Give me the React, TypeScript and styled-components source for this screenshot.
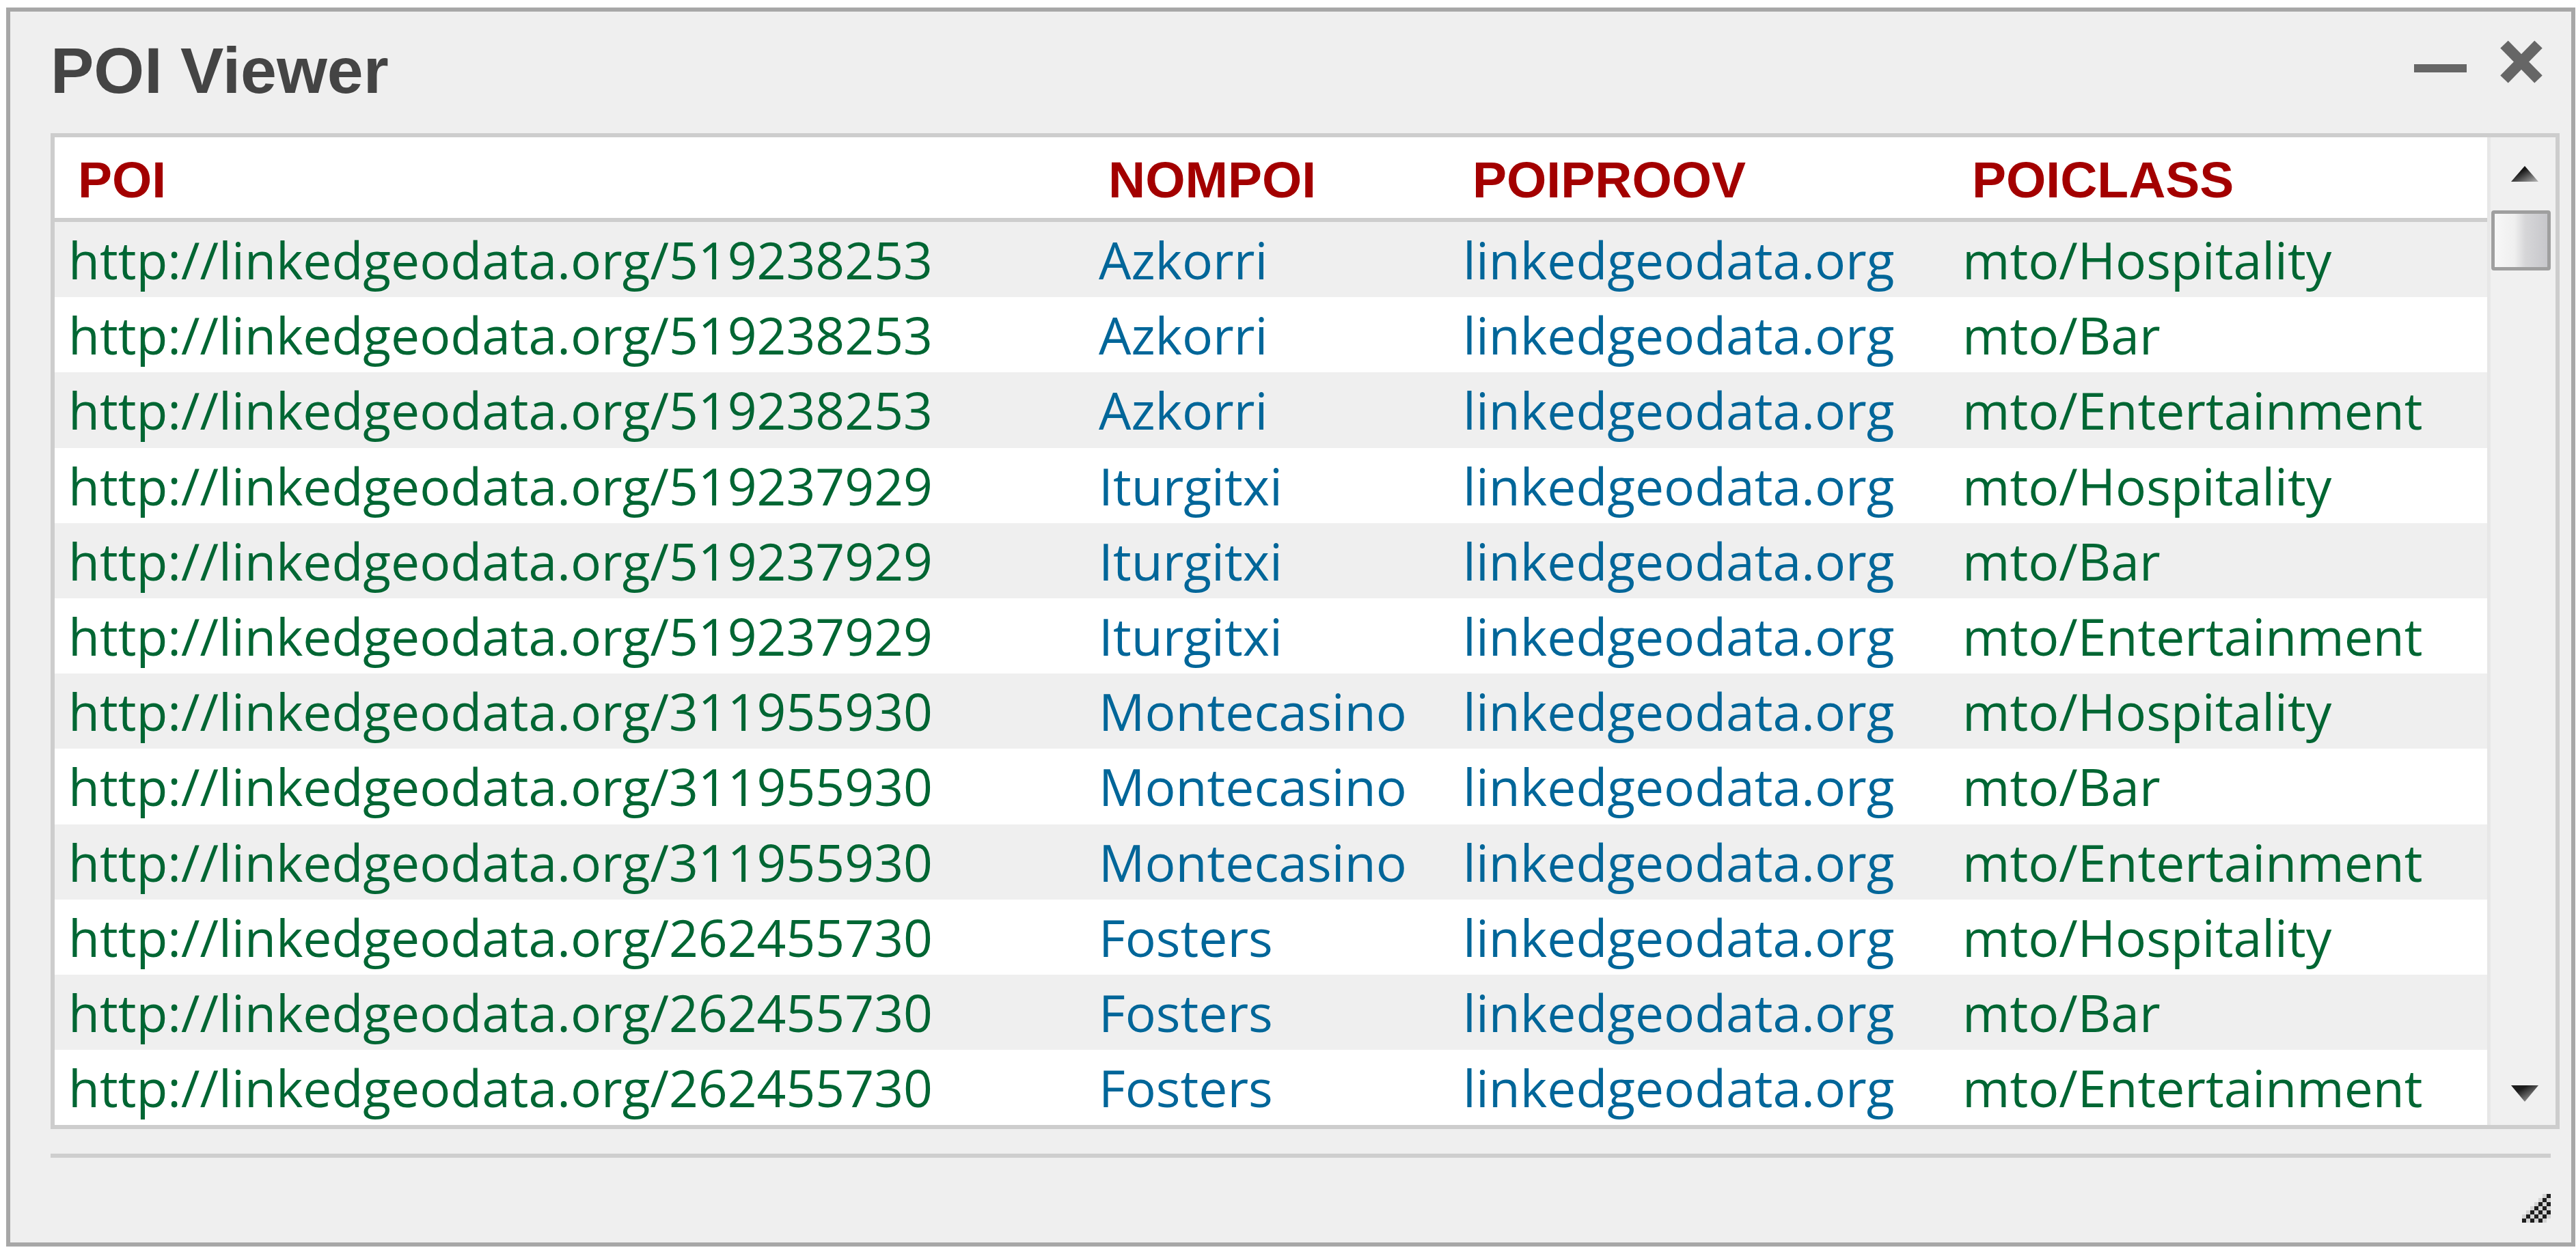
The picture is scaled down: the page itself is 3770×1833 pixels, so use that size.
import React from "react";
import styled, { createGlobalStyle } from "styled-components";

const GlobalStyle = createGlobalStyle`
  html, body {
    margin: 0;
    padding: 0;
    background: #ffffff;
    font-family: "Open Sans", "Liberation Sans", sans-serif;
  }
  * { box-sizing: border-box; }
`;

const Page = styled.div`
  padding: 11px 0 0 9px;
`;

const Window = styled.section`
  width: 3760px;
  height: 1814px;
  border: 6px solid #a7a7a7;
  background: #efefef;
  display: flex;
  flex-direction: column;
  padding: 0 17px 0 59px;
`;

const TitleBar = styled.header`
  height: 178px;
  flex-shrink: 0;
  display: flex;
  justify-content: space-between;
  align-items: flex-start;
`;

const Title = styled.h1`
  margin: 36px 0 0 0;
  font-family: "Liberation Sans", Arial, sans-serif;
  font-weight: bold;
  font-size: 95px;
  line-height: 100px;
  color: #444444;
`;

const WindowActions = styled.div`
  display: flex;
  align-items: flex-start;
  gap: 48px;
  margin: 41px 24px 0 0;
`;

const IconButton = styled.button<{ $w: number }>`
  width: ${(p) => p.$w}px;
  height: 65px;
  padding: 0;
  border: none;
  background: transparent;
  display: block;
  cursor: pointer;
  svg { display: block; }
`;

const TableFrame = styled.div`
  height: 1458px;
  flex-shrink: 0;
  border: 6px solid #cdcdcd;
  background: #ffffff;
  display: flex;
`;

const TableContent = styled.div`
  flex: 1;
  display: flex;
  flex-direction: column;
  overflow: hidden;
`;

const columns = "1508px 533px 731px 1fr";

const HeaderRow = styled.div`
  display: grid;
  grid-template-columns: ${columns};
  height: 124px;
  flex-shrink: 0;
  background: #ffffff;
  border-bottom: 6px solid #cdcdcd;
`;

const HeaderCell = styled.div`
  padding: 6px 0 0 34px;
  font-family: "Liberation Sans", Arial, sans-serif;
  font-weight: bold;
  font-size: 75px;
  line-height: 112px;
  color: #a30000;
  white-space: nowrap;
`;

const DataRow = styled.div<{ $odd: boolean }>`
  display: grid;
  grid-template-columns: ${columns};
  height: 110.2px;
  flex-shrink: 0;
  background: ${(p) => (p.$odd ? "#efefef" : "#ffffff")};
`;

const DataCell = styled.div<{ $tone: "green" | "blue" }>`
  padding-left: 20px;
  font-family: "Open Sans", sans-serif;
  font-size: 75px;
  line-height: 110.2px;
  color: ${(p) => (p.$tone === "green" ? "#006633" : "#006699")};
  white-space: nowrap;
`;

const Scrollbar = styled.div`
  width: 100px;
  flex-shrink: 0;
  display: flex;
  flex-direction: column;
  background: #f0f0f0;
  border-left: 5px solid #e7e7e7;
`;

const ScrollButton = styled.div<{ $h: number; $top: number }>`
  height: ${(p) => p.$h}px;
  flex-shrink: 0;
  display: flex;
  justify-content: center;
  padding: ${(p) => p.$top}px 0 0 5px;
`;

const ScrollThumb = styled.div`
  height: 88px;
  flex-shrink: 0;
  margin: 0 7px 0 1px;
  border: 5px solid #9f9f9f;
  border-radius: 4px;
  background: linear-gradient(to right, #f7f7f7 0%, #efefef 38%, #d6d6d8 58%, #c7c7cb 100%);
`;

const ScrollTrack = styled.div`
  flex: 1;
`;

const Separator = styled.div`
  height: 6px;
  flex-shrink: 0;
  margin: 36px 13px 0 0;
  background: #cecece;
`;

const Footer = styled.footer`
  flex: 1;
  display: flex;
  justify-content: flex-end;
  align-items: flex-end;
  padding: 0 13px 29px 0;
`;

type Row = { poi: string; nom: string; prov: string; cls: string };

const places: [string, string][] = [
  ["519238253", "Azkorri"],
  ["519237929", "Iturgitxi"],
  ["311955930", "Montecasino"],
  ["262455730", "Fosters"],
];
const classes = ["mto/Hospitality", "mto/Bar", "mto/Entertainment"];

const rows: Row[] = places.flatMap(([id, nom]) =>
  classes.map((cls) => ({
    poi: `http://linkedgeodata.org/${id}`,
    nom,
    prov: "linkedgeodata.org",
    cls,
  }))
);

const MinimizeIcon = () => (
  <svg width="77" height="65" viewBox="0 0 77 65">
    <rect x="0" y="36" width="77" height="12" fill="#666666" />
  </svg>
);

const CloseIcon = () => (
  <svg width="64" height="65" viewBox="0 0 64 65">
    <line x1="7" y1="7" x2="57" y2="58" stroke="#666666" strokeWidth="16" />
    <line x1="57" y1="7" x2="7" y2="58" stroke="#666666" strokeWidth="16" />
  </svg>
);

const UpArrow = () => (
  <svg width="40" height="23" viewBox="0 0 40 23">
    <defs>
      <linearGradient id="upGrad" x1="0" y1="0" x2="1" y2="1">
        <stop offset="0.35" stopColor="#151515" />
        <stop offset="1" stopColor="#b8b8b8" />
      </linearGradient>
    </defs>
    <polygon points="20,0 40,23 0,23" fill="url(#upGrad)" />
  </svg>
);

const DownArrow = () => (
  <svg width="40" height="24" viewBox="0 0 40 24">
    <defs>
      <linearGradient id="downGrad" x1="0" y1="0" x2="1" y2="1">
        <stop offset="0.3" stopColor="#1c1c1c" />
        <stop offset="1" stopColor="#c0c0c0" />
      </linearGradient>
    </defs>
    <polygon points="0,0 40,0 20,24" fill="url(#downGrad)" />
  </svg>
);

const ResizeGrip = () => {
  const cells: React.ReactNode[] = [];
  for (let r = 0; r < 7; r++) {
    for (let c = 0; c < 7; c++) {
      const s = r + c;
      if (s >= 6 && s <= 10 && s % 2 === 0) {
        cells.push(<rect key={`${r}-${c}`} x={c * 6} y={r * 6} width="6" height="6" fill="#1e1e1e" />);
      } else if (s >= 5 && s <= 11 && s % 2 === 1) {
        cells.push(<rect key={`${r}-${c}`} x={c * 6} y={r * 6} width="6" height="6" fill="#d4d4d4" />);
      }
    }
  }
  return (
    <svg width="42" height="42" viewBox="0 0 42 42">
      {cells}
    </svg>
  );
};

export default function App() {
  return (
    <>
      <GlobalStyle />
      <Page>
        <Window>
          <TitleBar>
            <Title>POI Viewer</Title>
            <WindowActions>
              <IconButton $w={77} aria-label="Minimize">
                <MinimizeIcon />
              </IconButton>
              <IconButton $w={64} aria-label="Close">
                <CloseIcon />
              </IconButton>
            </WindowActions>
          </TitleBar>
          <TableFrame>
            <TableContent>
              <HeaderRow>
                <HeaderCell>POI</HeaderCell>
                <HeaderCell>NOMPOI</HeaderCell>
                <HeaderCell>POIPROOV</HeaderCell>
                <HeaderCell>POICLASS</HeaderCell>
              </HeaderRow>
              {rows.map((r, i) => (
                <DataRow key={i} $odd={i % 2 === 0}>
                  <DataCell $tone="green">{r.poi}</DataCell>
                  <DataCell $tone="blue">{r.nom}</DataCell>
                  <DataCell $tone="blue">{r.prov}</DataCell>
                  <DataCell $tone="green">{r.cls}</DataCell>
                </DataRow>
              ))}
            </TableContent>
            <Scrollbar>
              <ScrollButton $h={107} $top={42}>
                <UpArrow />
              </ScrollButton>
              <ScrollThumb />
              <ScrollTrack />
              <ScrollButton $h={100} $top={42}>
                <DownArrow />
              </ScrollButton>
            </Scrollbar>
          </TableFrame>
          <Separator />
          <Footer>
            <ResizeGrip />
          </Footer>
        </Window>
      </Page>
    </>
  );
}
